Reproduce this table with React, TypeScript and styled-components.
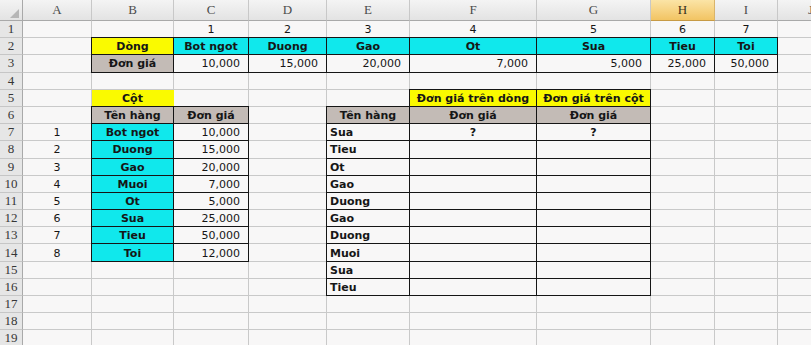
import styled, { createGlobalStyle } from "styled-components";

type Align = "left" | "center" | "right";

interface CellData {
  text?: string;
  fill?: string;
  bold?: boolean;
  align?: Align;
  // black thin border all round, like an Excel "All borders" range
  boxed?: boolean;
}

const COLUMNS = ["A", "B", "C", "D", "E", "F", "G", "H", "I", "J"];
const COLUMN_WIDTHS = [69, 82, 75, 78, 83, 127, 114, 64, 63, 66];
const ROW_COUNT = 19;
const ACTIVE_COLUMN = "H";

const YELLOW = "#fafa00";
const CYAN = "#10e8ec";
const GREY = "#c3bbb6";

const ITEMS = ["Bot ngot", "Duong", "Gao", "Ot", "Sua", "Tieu", "Toi"];
const ROW_PRICES = ["10,000", "15,000", "20,000", "7,000", "5,000", "25,000", "50,000"];
const COLUMN_ITEMS = ["Bot ngot", "Duong", "Gao", "Muoi", "Ot", "Sua", "Tieu", "Toi"];
const COLUMN_PRICES = ["10,000", "15,000", "20,000", "7,000", "5,000", "25,000", "50,000", "12,000"];
const LOOKUPS = ["Sua", "Tieu", "Ot", "Gao", "Duong", "Gao", "Duong", "Muoi", "Sua", "Tieu"];

// Build the sheet content keyed by cell address ("B2", "C7", ...)
const buildCells = (): Record<string, CellData> => {
  const cells: Record<string, CellData> = {};
  const put = (ref: string, data: CellData) => {
    cells[ref] = { ...cells[ref], ...data };
  };

  // row 1: column index numbers, row 2/3: horizontal price table
  ITEMS.forEach((item, i) => {
    const col = COLUMNS[i + 2];
    put(`${col}1`, { text: String(i + 1) });
    put(`${col}2`, { text: item, fill: CYAN, bold: true, boxed: true });
    put(`${col}3`, { text: ROW_PRICES[i], align: "right", boxed: true });
  });
  put("B2", { text: "Dòng", fill: YELLOW, bold: true, boxed: true });
  put("B3", { text: "Đơn giá", fill: GREY, bold: true, boxed: true });

  // vertical price table
  put("B5", { text: "Cột", fill: YELLOW, bold: true });
  put("B6", { text: "Tên hàng", fill: GREY, bold: true, boxed: true });
  put("C6", { text: "Đơn giá", fill: GREY, bold: true, boxed: true });
  COLUMN_ITEMS.forEach((item, i) => {
    const row = i + 7;
    put(`A${row}`, { text: String(i + 1) });
    put(`B${row}`, { text: item, fill: CYAN, bold: true, boxed: true });
    put(`C${row}`, { text: COLUMN_PRICES[i], align: "right", boxed: true });
  });

  // lookup table
  put("F5", { text: "Đơn giá trên dòng", fill: YELLOW, bold: true, boxed: true });
  put("G5", { text: "Đơn giá trên cột", fill: YELLOW, bold: true, boxed: true });
  put("E6", { text: "Tên hàng", fill: GREY, bold: true, boxed: true });
  put("F6", { text: "Đơn giá", fill: GREY, bold: true, boxed: true });
  put("G6", { text: "Đơn giá", fill: GREY, bold: true, boxed: true });
  LOOKUPS.forEach((item, i) => {
    const row = i + 7;
    put(`E${row}`, { text: item, bold: true, align: "left", boxed: true });
    put(`F${row}`, { boxed: true });
    put(`G${row}`, { boxed: true });
  });
  put("F7", { text: "?", bold: true });
  put("G7", { text: "?", bold: true });

  return cells;
};

const CELLS = buildCells();

const GlobalStyle = createGlobalStyle`
  html, body {
    margin: 0;
    padding: 0;
    background: #f8f7f7;
    overflow: hidden;
  }
`;

// Whole worksheet area, header row + 19 rows
const Sheet = styled.div`
  display: grid;
  grid-template-columns: 23px ${COLUMN_WIDTHS.map((w) => `${w}px`).join(" ")};
  grid-template-rows: 21px repeat(${ROW_COUNT}, 17.2px);
  width: max-content;
  background: #f8f7f7;
`;

// Select-all box in the top left corner
const Corner = styled.div`
  display: flex;
  align-items: flex-end;
  justify-content: flex-end;
  padding: 0 3px 2px 0;
  background: linear-gradient(#f3f3f3, #e3e3e3);
  border-right: 1px solid #a9a9a9;
  border-bottom: 1px solid #a9a9a9;
`;

const ColHead = styled.div<{ $active?: boolean }>`
  display: flex;
  align-items: center;
  justify-content: center;
  font-family: "Liberation Serif", "DejaVu Serif", serif;
  font-size: 13px;
  color: ${(p) => (p.$active ? "#3a3220" : "#4b4b4b")};
  background: ${(p) =>
    p.$active
      ? "linear-gradient(#fbe4a6, #f2c463)"
      : "linear-gradient(#f4f4f4, #e3e3e3)"};
  border-right: 1px solid ${(p) => (p.$active ? "#d9b46a" : "#c8c8c8")};
  border-bottom: 1px solid ${(p) => (p.$active ? "#c79a45" : "#a9a9a9")};
`;

const RowHead = styled.div`
  display: flex;
  align-items: center;
  justify-content: center;
  font-family: "Liberation Serif", "DejaVu Serif", serif;
  font-size: 13px;
  color: #363636;
  background: #e6e6e6;
  border-right: 1px solid #a9a9a9;
  border-bottom: 1px solid #c6c6c6;
`;

const Cell = styled.div<{
  $fill?: string;
  $bold?: boolean;
  $align: Align;
  $boxed?: boolean;
}>`
  display: flex;
  align-items: center;
  justify-content: ${(p) =>
    p.$align === "left" ? "flex-start" : p.$align === "right" ? "flex-end" : "center"};
  padding: 1px ${(p) => (p.$align === "right" ? "8px" : "2px")} 0
    ${(p) => (p.$align === "left" ? "3px" : "2px")};
  overflow: hidden;
  white-space: nowrap;
  font-family: "DejaVu Sans", Verdana, sans-serif;
  font-size: 11px;
  font-weight: ${(p) => (p.$bold ? 700 : 400)};
  color: #161616;
  background: ${(p) => p.$fill ?? "#f8f7f7"};
  border-right: 1px solid ${(p) => (p.$boxed ? "#151515" : p.$fill ?? "#c9c9c9")};
  border-bottom: 1px solid ${(p) => (p.$boxed ? "#151515" : p.$fill ?? "#c9c9c9")};
  box-shadow: ${(p) =>
    p.$boxed
      ? "-1px 0 0 #151515, 0 -1px 0 #151515, -1px -1px 0 #151515"
      : "none"};
`;

const SheetGrid = (): JSX.Element => {
  const rows = Array.from({ length: ROW_COUNT }, (_, i) => i + 1);
  return (
    <Sheet>
      <Corner>
        <svg width="9" height="9" viewBox="0 0 9 9">
          <polygon points="9,0 9,9 0,9" fill="#b6b6b6" />
        </svg>
      </Corner>
      {COLUMNS.map((col) => (
        <ColHead key={col} $active={col === ACTIVE_COLUMN}>
          {col}
        </ColHead>
      ))}
      {rows.map((row) => [
        <RowHead key={`h${row}`}>{row}</RowHead>,
        ...COLUMNS.map((col) => {
          const cell = CELLS[`${col}${row}`] ?? {};
          return (
            <Cell
              key={`${col}${row}`}
              $fill={cell.fill}
              $bold={cell.bold}
              $align={cell.align ?? "center"}
              $boxed={cell.boxed}
            >
              {cell.text}
            </Cell>
          );
        }),
      ])}
    </Sheet>
  );
};

const App = (): JSX.Element => {
  return (
    <>
      <GlobalStyle />
      <SheetGrid />
    </>
  );
};

export default App;
